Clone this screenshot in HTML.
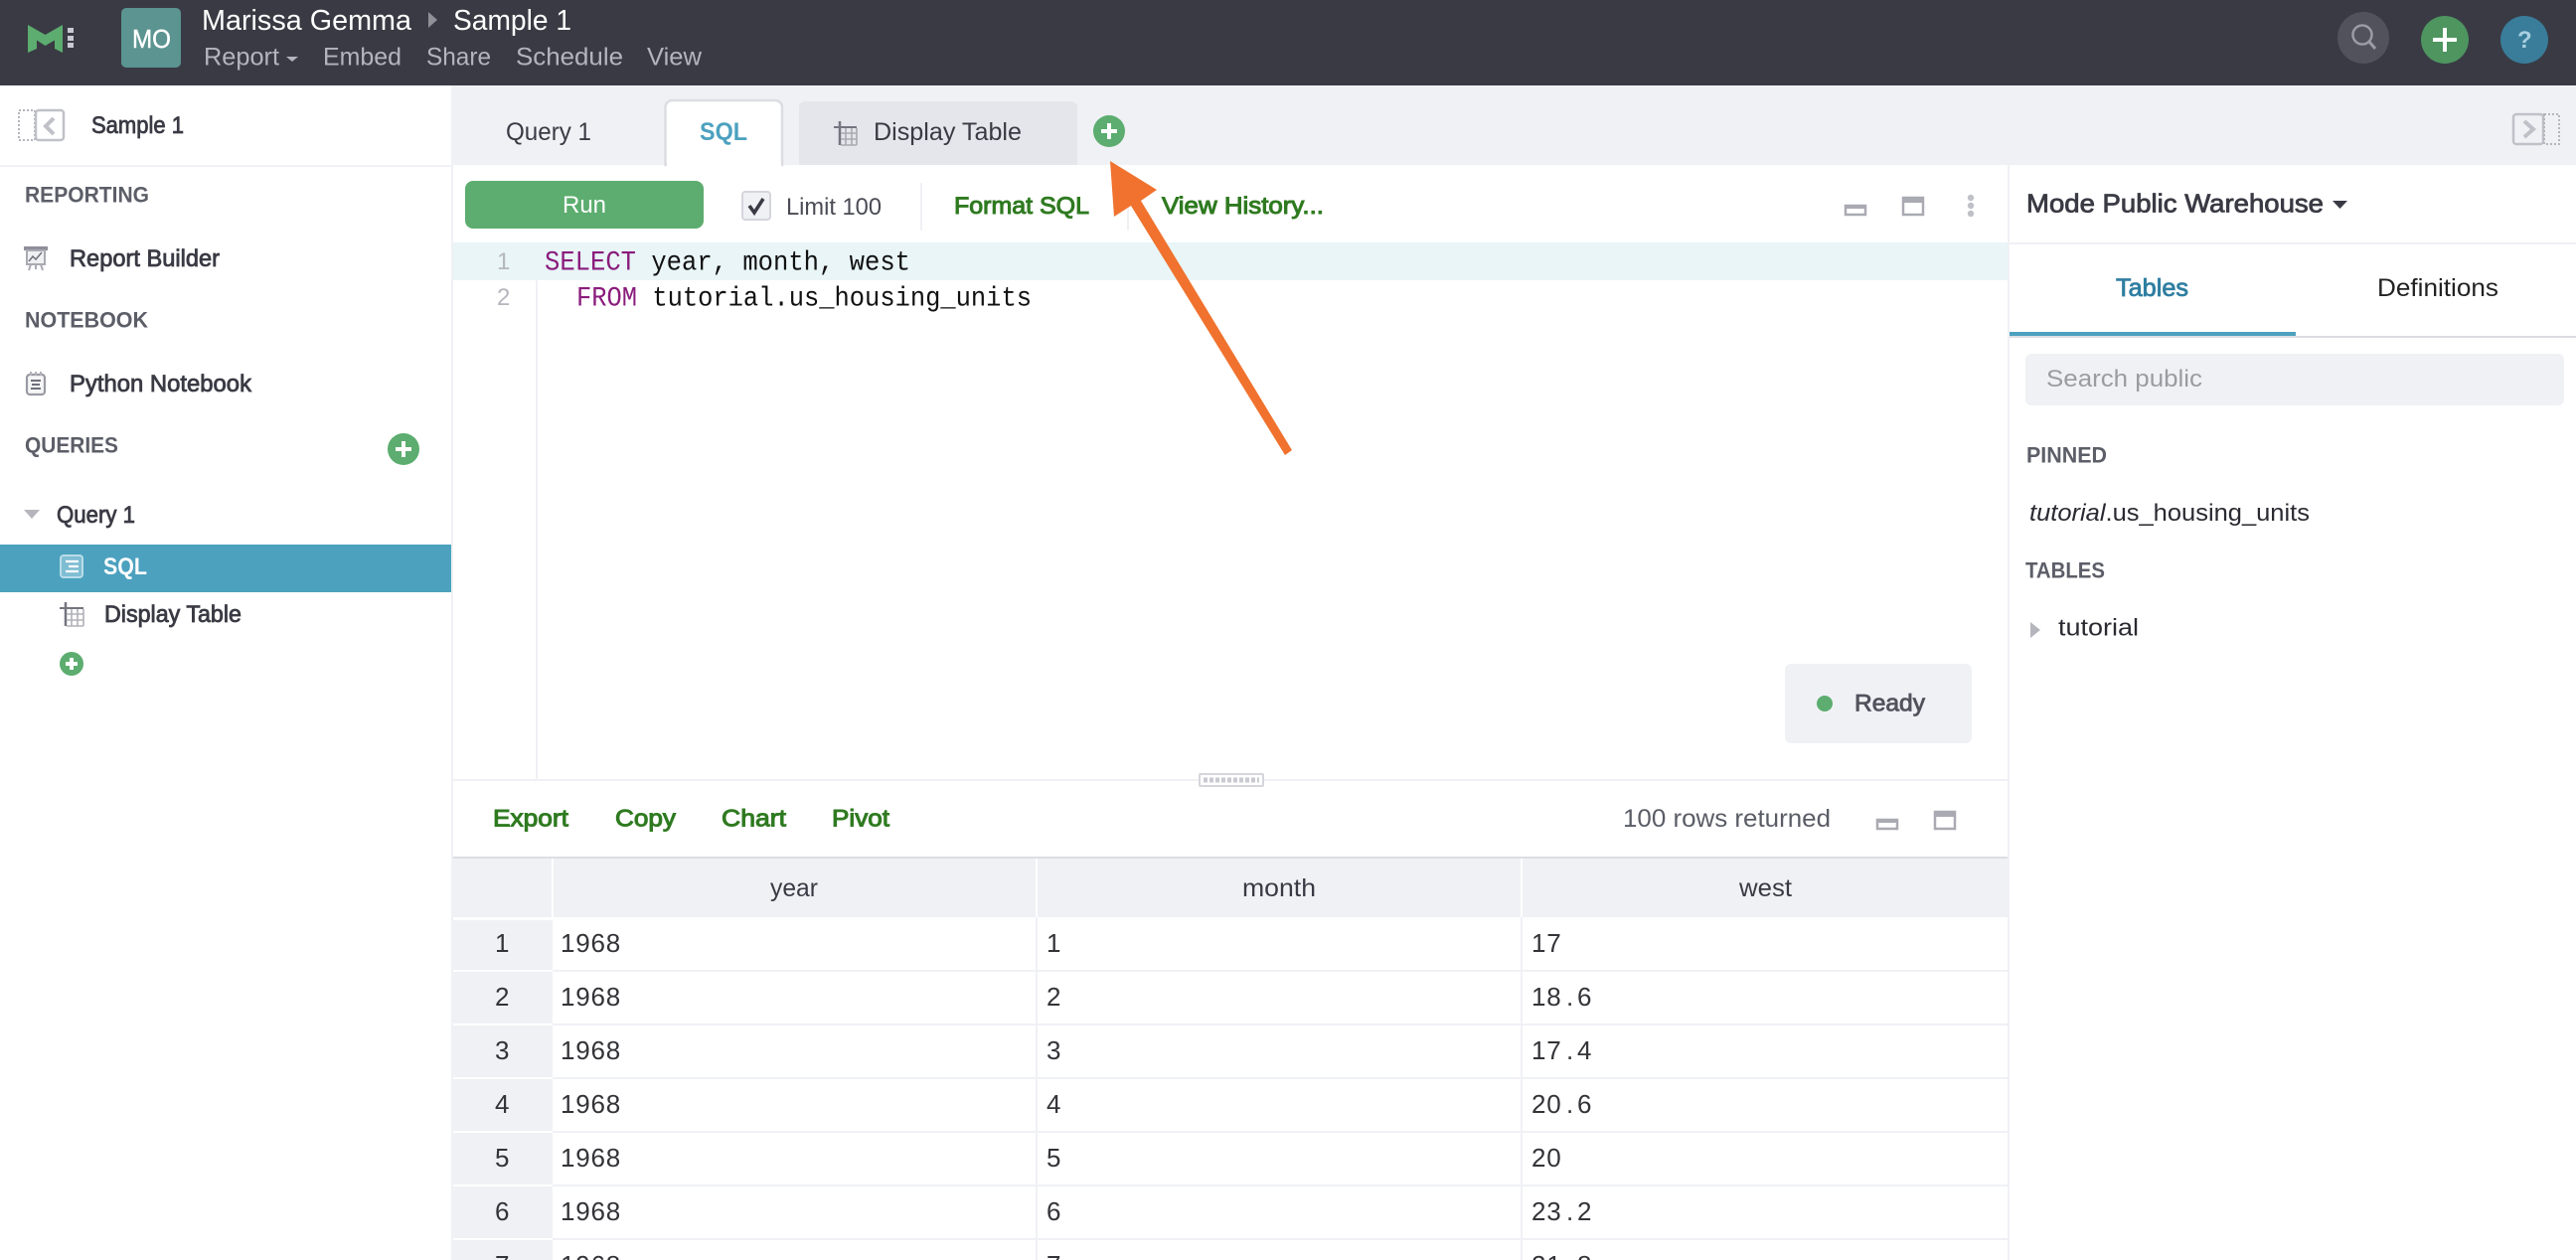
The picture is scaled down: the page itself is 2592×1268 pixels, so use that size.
<!DOCTYPE html>
<html><head><meta charset="utf-8"><title>Sample 1</title>
<style>
html,body{margin:0;padding:0;background:#fff;width:2592px;height:1268px;overflow:hidden}
svg{display:block}
text{font-family:"Liberation Sans",sans-serif;font-size:24px;fill:#3a3a44}
.m{stroke:currentColor;stroke-width:.8px}
.mono{font-family:"Liberation Mono",monospace;font-size:27.5px}
.cell{font-size:26px;letter-spacing:.8px;fill:#333338}
.sec{font-size:22px;font-weight:bold;fill:#5c5e68}
.nav{font-size:25px;fill:#b4b5bc}
.act{color:#2f7a20;fill:#2f7a20;font-size:24px;stroke-width:1px}
.kw{fill:#8a1c7c}
.ln{font-size:24px;fill:#b5b6bd}
</style></head><body>
<svg width="2592" height="1268" viewBox="0 0 2592 1268" xmlns="http://www.w3.org/2000/svg">
<!-- header -->
<rect width="2592" height="86" fill="#3a3a44"/>
<polygon points="28,25 45.5,35 63,25 63,53 55,49 55,40.5 45.5,46 37,40.5 37,49 28,53" fill="#5cad6f"/>
<g fill="#c9cad1"><rect x="68" y="28" width="6" height="5"/><rect x="68" y="36" width="6" height="5"/><rect x="68" y="43" width="6" height="5"/></g>
<rect x="122" y="8" width="60" height="60" rx="5" fill="#5b9490"/>
<text x="133" y="48" textLength="39" lengthAdjust="spacingAndGlyphs" class="m" style="fill:#fff;color:#fff;font-size:26px;stroke-width:.4px">MO</text>
<text x="203" y="30" style="fill:#fff;font-size:29px" textLength="211" lengthAdjust="spacingAndGlyphs">Marissa Gemma</text>
<polygon points="431,12 440,20 431,28" fill="#8f9098"/>
<text x="456" y="30" style="fill:#fff;font-size:29px" textLength="119" lengthAdjust="spacingAndGlyphs">Sample 1</text>
<text x="205" y="65.5" class="nav" textLength="76" lengthAdjust="spacingAndGlyphs">Report</text>
<polygon points="288,57 300,57 294,62" fill="#b4b5bc"/>
<text x="325" y="65.5" class="nav" textLength="79" lengthAdjust="spacingAndGlyphs">Embed</text>
<text x="429" y="65.5" class="nav" textLength="65" lengthAdjust="spacingAndGlyphs">Share</text>
<text x="519" y="65.5" class="nav" textLength="108" lengthAdjust="spacingAndGlyphs">Schedule</text>
<text x="651" y="65.5" class="nav" textLength="55" lengthAdjust="spacingAndGlyphs">View</text>
<circle cx="2378" cy="38" r="26" fill="#52525c"/>
<circle cx="2377" cy="35" r="9.5" fill="none" stroke="#9a9ba3" stroke-width="2.5"/>
<line x1="2384" y1="42" x2="2390" y2="49" stroke="#9a9ba3" stroke-width="3"/>
<circle cx="2460" cy="40" r="24" fill="#4e9560"/>
<rect x="2448" y="38" width="24" height="4" fill="#fff"/><rect x="2458" y="28" width="4" height="24" fill="#fff"/>
<circle cx="2540" cy="40" r="24" fill="#397d9a"/>
<text x="2533" y="48" style="font-size:24px;font-weight:bold;fill:#a8cfe0">?</text>
<!-- tab bar -->
<rect x="456" y="86" width="2136" height="80" fill="#f0f1f5"/>
<!-- sidebar -->
<rect x="454" y="86" width="2" height="1182" fill="#f0f1f5"/>
<rect x="0" y="166" width="456" height="2" fill="#f0f1f5"/>
<rect x="19" y="111" width="16" height="30" fill="none" stroke="#b5b6bd" stroke-width="2" stroke-dasharray="2 2"/>
<rect x="36" y="111" width="28" height="30" rx="3" fill="#fff" stroke="#c0c1c8" stroke-width="2.5"/>
<polyline points="54,119 46,127 54,135" fill="none" stroke="#c0c1c8" stroke-width="4"/>
<text x="92" y="134" class="m" textLength="93" lengthAdjust="spacingAndGlyphs" style="color:#3a3a44">Sample 1</text>
<text x="25" y="203.5" class="sec" textLength="125" lengthAdjust="spacingAndGlyphs">REPORTING</text>
<rect x="24" y="248" width="24" height="4" fill="#8e8f99"/>
<rect x="27" y="252" width="18" height="14" fill="#f0f0f3" stroke="#a9aab2" stroke-width="2"/>
<polyline points="29,263 33,258 36,261 42,254" fill="none" stroke="#6f707a" stroke-width="1.5"/>
<path d="M31 266l-2 6M41 266l2 6M36 266v5" stroke="#a9aab2" stroke-width="2" fill="none"/>
<text x="70" y="268" class="m" textLength="151" lengthAdjust="spacingAndGlyphs" style="color:#3a3a44">Report Builder</text>
<text x="25" y="329.5" class="sec" textLength="124" lengthAdjust="spacingAndGlyphs">NOTEBOOK</text>
<rect x="27" y="377" width="18" height="20" rx="3" fill="#f5f5f7" stroke="#9a9ba4" stroke-width="2.2"/>
<path d="M31 374v4M36 374v4M41 374v4" stroke="#b0b1b9" stroke-width="2"/>
<path d="M31 383h10M32 387h8M31 391h10" stroke="#6f707a" stroke-width="2"/>
<text x="70" y="394" class="m" textLength="183" lengthAdjust="spacingAndGlyphs" style="color:#3a3a44">Python Notebook</text>
<text x="25" y="455.5" class="sec" textLength="94" lengthAdjust="spacingAndGlyphs">QUERIES</text>
<circle cx="406" cy="452" r="16" fill="#5cad6f"/><rect x="398" y="450" width="16" height="4" fill="#fff"/><rect x="404" y="444" width="4" height="16" fill="#fff"/>
<polygon points="24,513 40,513 32,522" fill="#b5b6bd"/>
<text x="57" y="526" class="m" textLength="79" lengthAdjust="spacingAndGlyphs" style="color:#3a3a44">Query 1</text>
<rect x="0" y="548" width="454" height="48" fill="#4ca1bf"/>
<rect x="61" y="559" width="22" height="22" rx="3" fill="#7fbdd3" stroke="#b8dce8" stroke-width="2"/>
<path d="M66 565h13M69 570h10M66 575h13" stroke="#fff" stroke-width="2.2"/>
<text x="104" y="578" textLength="44" lengthAdjust="spacingAndGlyphs" style="fill:#fff;font-weight:bold">SQL</text>
<path d="M66 606v24" stroke="#74757f" stroke-width="2.5"/><path d="M60 612h24" stroke="#74757f" stroke-width="2"/>
<path d="M72 613v17M78 613v17M84 613v17M67 618h17M67 624h17M67 630h17" stroke="#b0b1b9" stroke-width="1.6"/>
<text x="105" y="626" class="m" textLength="138" lengthAdjust="spacingAndGlyphs" style="color:#3a3a44">Display Table</text>
<circle cx="72" cy="668" r="12" fill="#5cad6f"/><rect x="66" y="666" width="12" height="4" fill="#fff"/><rect x="70" y="662" width="4" height="12" fill="#fff"/>
<!-- tabs -->
<text x="509" y="141" style="font-size:25px" textLength="86" lengthAdjust="spacingAndGlyphs">Query 1</text>
<path d="M669.5 166V108a7 7 0 0 1 7-7H780a7 7 0 0 1 7 7v58Z" fill="#fff" stroke="#dcdde3" stroke-width="2.5"/>
<rect x="671" y="164" width="115" height="4" fill="#fff"/>
<text x="704" y="141" textLength="48" lengthAdjust="spacingAndGlyphs" style="fill:#4ca1bf;font-size:25px;font-weight:bold">SQL</text>
<path d="M804 166V108a6 6 0 0 1 6-6H1078a6 6 0 0 1 6 6v58Z" fill="#e5e6eb"/>
<path d="M845 122v24" stroke="#74757f" stroke-width="2.5"/><path d="M839 128h23" stroke="#74757f" stroke-width="2"/>
<path d="M851 129v17M857 129v17M862 129v17M846 134h16M846 140h16M846 146h16" stroke="#a9aab2" stroke-width="1.6"/>
<text x="879" y="141" style="font-size:25px" textLength="149" lengthAdjust="spacingAndGlyphs">Display Table</text>
<circle cx="1116" cy="132" r="16" fill="#5cad6f"/><rect x="1108" y="130" width="16" height="4" fill="#fff"/><rect x="1114" y="124" width="4" height="16" fill="#fff"/>
<rect x="2529" y="115" width="30" height="30" rx="3" fill="#f0f1f5" stroke="#c0c1c8" stroke-width="2.5"/>
<rect x="2560" y="115" width="15" height="30" fill="none" stroke="#b5b6bd" stroke-width="2" stroke-dasharray="2 2"/>
<polyline points="2540,122 2549,130 2540,138" fill="none" stroke="#c0c1c8" stroke-width="4"/>
<!-- toolbar -->
<rect x="468" y="182" width="240" height="48" rx="8" fill="#5cad6f"/>
<text x="566" y="214" textLength="44" lengthAdjust="spacingAndGlyphs" style="fill:#fff">Run</text>
<rect x="747" y="193" width="28" height="28" rx="3" fill="#f0f1f5" stroke="#d5d6dc" stroke-width="2"/>
<polyline points="754,207 759,214 768,200" fill="none" stroke="#3a3a44" stroke-width="3.5"/>
<text x="791" y="216" textLength="96" lengthAdjust="spacingAndGlyphs" style="fill:#4a4b55">Limit 100</text>
<rect x="926" y="184" width="2" height="48" fill="#f0f1f5"/>
<text x="960" y="215" class="m act" textLength="136" lengthAdjust="spacingAndGlyphs">Format SQL</text>
<rect x="1134" y="184" width="2" height="48" fill="#f0f1f5"/>
<text x="1169" y="215" class="m act" textLength="163" lengthAdjust="spacingAndGlyphs">View History...</text>
<rect x="1857" y="207" width="20" height="9" fill="#fff" stroke="#a9aab2" stroke-width="2.5"/><rect x="1856" y="206" width="22" height="4" fill="#a9aab2"/>
<rect x="1915" y="199" width="20" height="17" fill="#fff" stroke="#a9aab2" stroke-width="2.5"/><rect x="1914" y="198" width="22" height="6" fill="#a9aab2"/>
<g fill="#c0c1c8"><circle cx="1983" cy="199" r="3.2"/><circle cx="1983" cy="207" r="3.2"/><circle cx="1983" cy="215" r="3.2"/></g>
<!-- editor -->
<rect x="456" y="244" width="1564" height="38" fill="#e9f5f7"/>
<rect x="539" y="282" width="2" height="502" fill="#f0f1f5"/>
<text x="500" y="271" class="ln">1</text>
<text x="500" y="307" class="ln">2</text>
<text x="548" y="271.5" class="mono" xml:space="preserve" textLength="368" lengthAdjust="spacingAndGlyphs"><tspan class="kw">SELECT</tspan><tspan style="fill:#111"> year, month, west</tspan></text>
<text x="580" y="307.5" class="mono" xml:space="preserve" textLength="458" lengthAdjust="spacingAndGlyphs"><tspan class="kw">FROM</tspan><tspan style="fill:#111"> tutorial.us_housing_units</tspan></text>
<rect x="1796" y="668" width="188" height="80" rx="6" fill="#f0f1f5"/>
<circle cx="1836" cy="708" r="8" fill="#5cad6f"/>
<text x="1866" y="715.5" class="m" textLength="71" lengthAdjust="spacingAndGlyphs" style="fill:#50525c;color:#50525c">Ready</text>
<!-- divider -->
<rect x="456" y="784" width="1564" height="2" fill="#f0f1f5"/>
<rect x="1207" y="779" width="64" height="12" rx="1" fill="#fff" stroke="#d5d6dc" stroke-width="2"/>
<line x1="1211" y1="785" x2="1267" y2="785" stroke="#c9cad1" stroke-width="5" stroke-dasharray="4 2"/>
<!-- results toolbar -->
<text x="496" y="831.5" class="m act" textLength="76" lengthAdjust="spacingAndGlyphs">Export</text>
<text x="619" y="831.5" class="m act" textLength="61" lengthAdjust="spacingAndGlyphs">Copy</text>
<text x="726" y="831.5" class="m act" textLength="65" lengthAdjust="spacingAndGlyphs">Chart</text>
<text x="837" y="831.5" class="m act" textLength="58" lengthAdjust="spacingAndGlyphs">Pivot</text>
<text x="1633" y="832" textLength="209" lengthAdjust="spacingAndGlyphs" style="fill:#5a5c66;font-size:25px">100 rows returned</text>
<rect x="1889" y="825" width="20" height="9" fill="#fff" stroke="#a9aab2" stroke-width="2.5"/><rect x="1888" y="824" width="22" height="4" fill="#a9aab2"/>
<rect x="1947" y="817" width="20" height="17" fill="#fff" stroke="#a9aab2" stroke-width="2.5"/><rect x="1946" y="816" width="22" height="6" fill="#a9aab2"/>
<!-- table -->
<rect x="456" y="862" width="1564" height="2" fill="#dcdde3"/>
<rect x="456" y="864" width="1564" height="59" fill="#f0f1f5"/>
<rect x="456" y="926" width="100" height="342" fill="#f0f1f5"/>
<rect x="555" y="864" width="2" height="59" fill="#fff"/>
<rect x="1042" y="864" width="2" height="59" fill="#fff"/>
<rect x="1530" y="864" width="2" height="59" fill="#fff"/>
<rect x="1042" y="923" width="2" height="345" fill="#f0f1f5"/>
<rect x="1530" y="923" width="2" height="345" fill="#f0f1f5"/>
<g fill="#f0f1f5"><rect x="456" y="976" width="1564" height="2"/><rect x="456" y="1030" width="1564" height="2"/><rect x="456" y="1084" width="1564" height="2"/><rect x="456" y="1138" width="1564" height="2"/><rect x="456" y="1192" width="1564" height="2"/><rect x="456" y="1246" width="1564" height="2"/></g>
<rect x="456" y="976" width="100" height="2" fill="#fff"/><rect x="456" y="1030" width="100" height="2" fill="#fff"/><rect x="456" y="1084" width="100" height="2" fill="#fff"/><rect x="456" y="1138" width="100" height="2" fill="#fff"/><rect x="456" y="1192" width="100" height="2" fill="#fff"/><rect x="456" y="1246" width="100" height="2" fill="#fff"/>
<text x="775" y="902" style="font-size:25px" textLength="48" lengthAdjust="spacingAndGlyphs">year</text>
<text x="1250" y="902" style="font-size:25px" textLength="74" lengthAdjust="spacingAndGlyphs">month</text>
<text x="1750" y="902" style="font-size:25px" textLength="53" lengthAdjust="spacingAndGlyphs">west</text>
<text x="498" y="958" class="cell">1</text><text x="564" y="958" class="cell">1968</text><text x="1053" y="958" class="cell">1</text><text x="1541" y="958" class="cell">17</text>
<text x="498" y="1012" class="cell">2</text><text x="564" y="1012" class="cell">1968</text><text x="1053" y="1012" class="cell">2</text><text x="1541 1556.3 1576 1587" y="1012" class="cell">18.6</text>
<text x="498" y="1066" class="cell">3</text><text x="564" y="1066" class="cell">1968</text><text x="1053" y="1066" class="cell">3</text><text x="1541 1556.3 1576 1587" y="1066" class="cell">17.4</text>
<text x="498" y="1120" class="cell">4</text><text x="564" y="1120" class="cell">1968</text><text x="1053" y="1120" class="cell">4</text><text x="1541 1556.3 1576 1587" y="1120" class="cell">20.6</text>
<text x="498" y="1174" class="cell">5</text><text x="564" y="1174" class="cell">1968</text><text x="1053" y="1174" class="cell">5</text><text x="1541" y="1174" class="cell">20</text>
<text x="498" y="1228" class="cell">6</text><text x="564" y="1228" class="cell">1968</text><text x="1053" y="1228" class="cell">6</text><text x="1541 1556.3 1576 1587" y="1228" class="cell">23.2</text>
<text x="498" y="1282" class="cell">7</text><text x="564" y="1282" class="cell">1968</text><text x="1053" y="1282" class="cell">7</text><text x="1541 1556.3 1576 1587" y="1282" class="cell">21.8</text>
<!-- right panel -->
<rect x="2020" y="166" width="572" height="1102" fill="#fff"/>
<rect x="2020" y="166" width="2" height="1102" fill="#f0f1f5"/>
<text x="2039" y="213.5" class="m" textLength="299" lengthAdjust="spacingAndGlyphs" style="font-size:26px;color:#3a3a44">Mode Public Warehouse</text>
<polygon points="2347,202 2362,202 2354.5,210" fill="#3a3a44"/>
<rect x="2022" y="244" width="570" height="2" fill="#f0f1f5"/>
<text x="2129" y="298" class="m" textLength="73" lengthAdjust="spacingAndGlyphs" style="fill:#2f7ea1;color:#2f7ea1;font-size:25px">Tables</text>
<text x="2392" y="298" textLength="122" lengthAdjust="spacingAndGlyphs" style="fill:#222;font-size:25px">Definitions</text>
<rect x="2022" y="338" width="570" height="2" fill="#dcdde3"/>
<rect x="2022" y="334" width="288" height="4" fill="#4ca1bf"/>
<rect x="2038" y="356" width="542" height="52" rx="6" fill="#f0f1f5"/>
<text x="2059" y="389" textLength="157" lengthAdjust="spacingAndGlyphs" style="fill:#9b9ba1">Search public</text>
<text x="2039" y="465.5" class="sec" textLength="81" lengthAdjust="spacingAndGlyphs">PINNED</text>
<text x="2042" y="524" textLength="282" lengthAdjust="spacingAndGlyphs" style="fill:#2a2a32"><tspan font-style="italic">tutorial</tspan>.us_housing_units</text>
<text x="2038" y="581.5" class="sec" textLength="80" lengthAdjust="spacingAndGlyphs">TABLES</text>
<polygon points="2043,626 2053,634 2043,642" fill="#b5b6bd"/>
<text x="2071" y="639.5" textLength="81" lengthAdjust="spacingAndGlyphs" style="fill:#2a2a32">tutorial</text>
<!-- arrow -->
<polygon points="1117,162 1164,191 1148,202 1300,453 1293,458 1138,207 1121,218" fill="#f0722e"/>
</svg>
</body></html>
